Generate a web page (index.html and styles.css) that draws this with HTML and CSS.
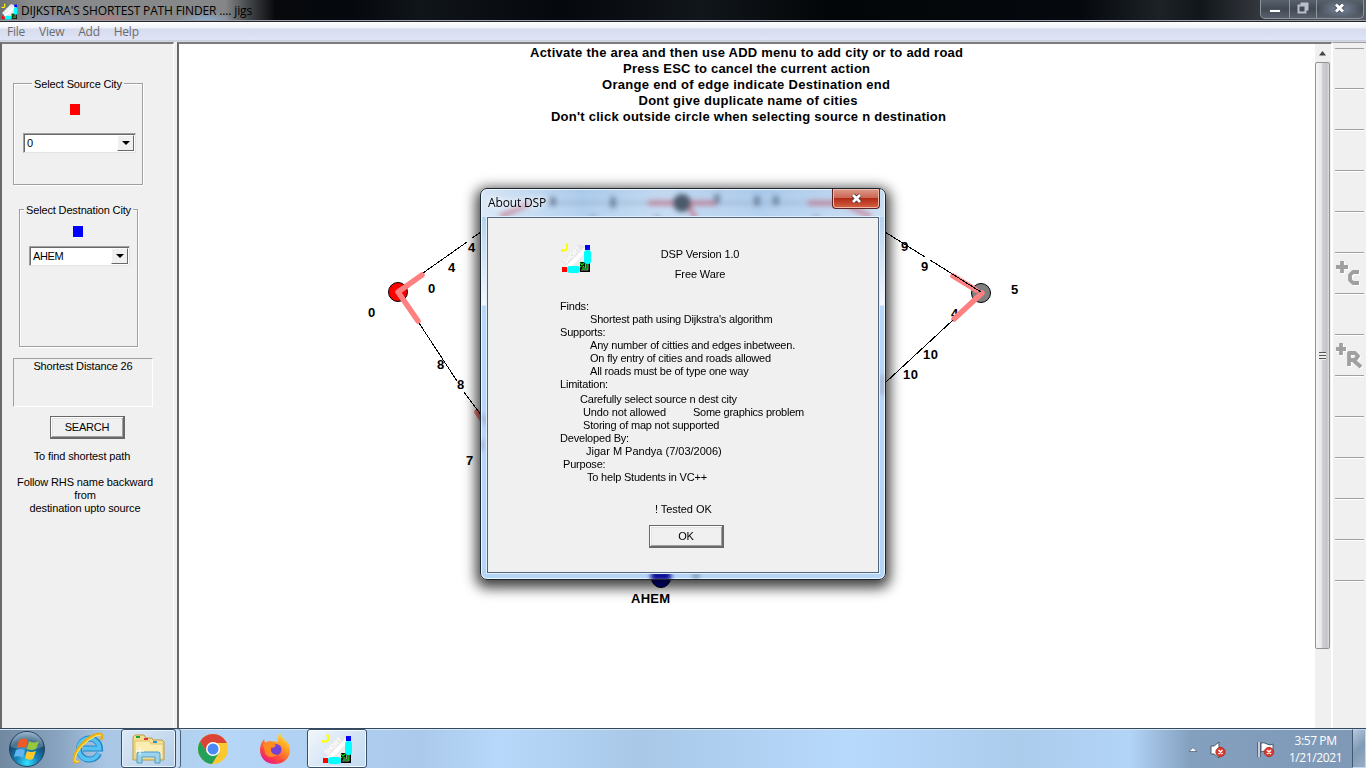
FILE: index.html
```html
<!DOCTYPE html>
<html lang="en">
<head>
<meta charset="utf-8">
<title>DIJKSTRA'S SHORTEST PATH FINDER .... jigs</title>
<link rel="stylesheet" href="styles.css">
</head>
<body>
<svg class="defs" width="0" height="0">
  <symbol id="dsp" viewBox="0 0 32 32">
    <path d="M2 19L19 2L27 5L8 25z" fill="#e6e6e6"/>
    <path d="M7 28L27 8v16L10 29z" fill="#ececec"/>
    <path d="M6.500 26.500L27 6" stroke="#fff" stroke-width="4"/>
    <text class="short" x="0" y="0" transform="translate(6 22) rotate(-44)" textLength="21" lengthAdjust="spacingAndGlyphs">SHORT</text>
    <path d="M5.500 2.500H7V7L5.500 8.500H2V7" fill="none" stroke="#ff0" stroke-width="2"/>
    <path d="M25 3h5v5h-5z" fill="#00f"/>
    <path d="M20 20h10v10H20z" fill="#000"/>
    <path d="M28 21v7h-7M25.500 22v4H22" fill="none" stroke="#eee" stroke-width=".6"/>
    <path d="M20 21l4 4m0-4l-4 4M27 22v5h-5" fill="none" stroke="#0d0" stroke-width="1.200"/>
    <rect x="24" y="8" width="7" height="14" rx="3" fill="#0ff"/>
    <rect x="7" y="24" width="13" height="7" rx="3" fill="#0ff"/>
    <path d="M2 25h5v5H2z" fill="red"/>
  </symbol>
</svg>

<header class="titlebar">
  <svg class="app-icon"><use href="#dsp"/></svg>
  <span class="app-title">DIJKSTRA'S SHORTEST PATH FINDER .... jigs</span>
  <div class="win-buttons">
    <span class="wb wb-min"><svg width="12" height="16"><rect x=".5" y="9.500" width="11" height="3" fill="#fff" stroke="#4c5360"/></svg></span>
    <span class="wb wb-max"><svg width="12" height="16"><path d="M3.500 3.500h7v7M1.500 5.500h7v7h-7z" fill="none" stroke="#b9c0cc" stroke-width="2"/></svg></span>
    <span class="wb wb-close"><svg width="14" height="16"><path d="M3 4.500l7 7m0-7l-7 7" stroke="#4c5360" stroke-width="5"/><path d="M3 4.500l7 7m0-7l-7 7" stroke="#fff" stroke-width="3"/></svg></span>
  </div>
</header>

<nav class="menubar"><span>File</span><span>View</span><span>Add</span><span>Help</span></nav>

<main class="main">
  <aside class="side">
    <fieldset class="group source">
      <legend>Select Source City</legend>
      <i class="swatch red"></i>
      <div class="combo"><span>0</span><b><i></i></b></div>
    </fieldset>
    <fieldset class="group dest">
      <legend>Select Destnation City</legend>
      <i class="swatch blue"></i>
      <div class="combo"><span>AHEM</span><b><i></i></b></div>
    </fieldset>
    <div class="result">Shortest Distance 26</div>
    <div class="button search">SEARCH</div>
    <p class="hint">To find shortest path</p>
    <p class="hint follow">Follow RHS name backward<br>from<br>destination upto source</p>
  </aside>

  <section class="canvas">
    <svg class="graph" width="1136" height="685" viewBox="179 44 1136 685">
      <g class="help" text-anchor="middle">
        <text x="746.500" y="57" textLength="433">Activate the area and then use ADD menu to add city or to add road</text>
        <text x="746.500" y="73" textLength="247">Press ESC to cancel the current action</text>
        <text x="746" y="89" textLength="288">Orange end of edge indicate Destination end</text>
        <text x="748" y="105" textLength="219">Dont give duplicate name of cities</text>
        <text x="748.500" y="121" textLength="395">Don't click outside circle when selecting source n destination</text>
      </g>
      <g class="nodes">
        <circle cx="398" cy="292" r="9.500" fill="red"/>
        <circle cx="981" cy="293" r="9.500" fill="#808080"/>
        <circle cx="661" cy="578" r="9.500" fill="#0000b0"/>
      </g>
      <g class="labels">
        <text x="468" y="252">4</text><text x="448" y="272">4</text>
        <text x="428" y="293">0</text><text x="368" y="317">0</text>
        <text x="437" y="369">8</text><text x="457" y="389">8</text>
        <text x="466" y="465">7</text><text x="901" y="251">9</text>
        <text x="921" y="271">9</text><text x="951" y="318">4</text>
        <text x="1011" y="294">5</text><text x="923" y="359" textLength="15">10</text>
        <text x="903" y="379" textLength="15">10</text>
        <text x="631" y="603" textLength="39">AHEM</text>
      </g>
      <path class="dest-end" d="M422 275L398 292L418 321M953 276L976 290M982 293L954 319M477 412l6 9"/>
      <path class="edge" d="M423 273L467 242M472 238L481 232M419 323L457 381M464 392L481 415M885 232L925 257M930 260L981 292M953 320L885 383"/>
    </svg>
  </section>

  <div class="scroll">
    <div class="arrow"><svg width="8" height="5"><path d="M0 4.500L3.500 0L7 4.500z" fill="#444"/></svg></div>
    <div class="thumb"><span class="grip"></span></div>
  </div>

  <div class="tools">
    <i class="tool first"></i><i class="tool"></i><i class="tool"></i><i class="tool"></i><i class="tool"></i>
    <i class="tool"><svg width="28" height="28"><g class="etch-light"><path d="M7 3v12M1 9h12M24 14h-6l-3 3v5l3 3h6"/></g><g class="etch"><path d="M6 2v12M0 8h12M23 13h-6l-3 3v5l3 3h6"/></g></svg></i>
    <i class="tool"></i>
    <i class="tool"><svg width="28" height="28"><g class="etch-light"><path d="M6 3v12M0 9h11M14 26V13h6l3 3-3 4h-6M18 20l8 7"/></g><g class="etch"><path d="M5 2v12M-1 8h11M13 25V12h6l3 3-3 4h-6M17 19l8 7"/></g></svg></i>
    <i class="tool"></i><i class="tool"></i><i class="tool"></i><i class="tool"></i><i class="tool"></i>
  </div>
</main>

<footer class="taskbar">
  <div class="task orb"><svg width="40" height="38" viewBox="0 0 40 38">
    <defs><radialGradient id="orbg" cx=".5" cy=".9" r=".9"><stop offset="0" stop-color="#35e3ff"/><stop offset=".35" stop-color="#1583bb"/><stop offset=".7" stop-color="#174a72"/><stop offset="1" stop-color="#86a9c4"/></radialGradient></defs>
    <circle cx="20" cy="19" r="17.500" fill="url(#orbg)" stroke="#26435e"/>
    <path d="M4 17a16 15 0 0 1 32 0Q20 22 4 17z" fill="#fff" opacity=".22"/>
    <path d="M12 10q5-3 9 0l-2 8q-5-2-9 0z" fill="#ee5a25"/>
    <path d="M22 11q5 3 10 0l-3 8q-4 2-9 0z" fill="#96c93a"/>
    <path d="M9 20q5-2 9 0l-2 8q-4-3-9-1z" fill="#5fb6f0"/>
    <path d="M20 21q4 2 9 0l-3 8q-4 2-8-1z" fill="#fdc92b"/>
  </svg></div>
  <div class="task ie"><svg width="34" height="34" viewBox="0 0 34 34">
    <path d="M27 21.500a10.500 10.500 0 1 1 1-5H11" fill="none" stroke="#1f86cb" stroke-width="6"/>
    <path d="M26.500 21.500a10.500 10.500 0 1 1 1-5H11" fill="none" stroke="#55c2f3" stroke-width="4"/>
    <path d="M7 29C-1 34 1 22 9 13S29-1 30 4q0 2-1 4" fill="none" stroke="#e9ad10" stroke-width="2.600"/>
    <path d="M7 29C0 32 3 22 10 14S28 1 29 4" fill="none" stroke="#ffe04d" stroke-width="1.300"/>
  </svg></div>
  <div class="task explorer active"><svg width="34" height="32" viewBox="0 0 34 32">
    <path d="M2 4l2-2h9l2 3h6l1 2h9l2 2v18H2z" fill="#f5df8f" stroke="#b99a45"/>
    <path d="M4 8h14l2 3h12v15H4z" fill="#fbedb0" stroke="#d8bd66" stroke-width=".8"/>
    <path d="M5 3h4v2H5z" fill="#15a33a"/><path d="M13 5h4v2h-4z" fill="#d33"/><path d="M22 8h4v2h-4z" fill="#2a8fd6"/>
    <path d="M6 30V21q0-2 2-2h19q2 0 2 2v9h-5v-6H11v6z" fill="#9bd3ec" stroke="#4d9bc4"/>
    <path d="M9 14v8M5 18h8" stroke="#fff" stroke-width="1"/>
  </svg></div>
  <div class="task chrome"><svg width="32" height="32" viewBox="0 0 32 32">
    <circle cx="16" cy="16" r="15" fill="#fbc92f"/>
    <path d="M3 8.500A15 15 0 0 1 29 8.500L30 10H16L10 20z" fill="#dc4437"/>
    <path d="M3 8.500A15 15 0 0 0 15 31l7-11.500L10 19.500z" fill="#23a05a"/>
    <circle cx="16" cy="16" r="7" fill="#fff"/><circle cx="16" cy="16" r="5.500" fill="#4a8af4"/>
  </svg></div>
  <div class="task firefox"><svg width="32" height="34" viewBox="0 0 32 34">
    <defs><linearGradient id="ff" x1=".9" y1="0" x2=".25" y2="1"><stop offset="0" stop-color="#fff04a"/><stop offset=".4" stop-color="#ff9a22"/><stop offset=".75" stop-color="#ff4243"/><stop offset="1" stop-color="#e31587"/></linearGradient></defs>
    <path d="M16 32C6 32 1 25 1 18q0-6 4-11l1 4q2-2 5-2l8 1q-1-6 2-9 1 4 5 7 5 4 5 10c0 8-6 14-15 14z" fill="url(#ff)"/>
    <circle cx="17" cy="17.500" r="5.500" fill="#7442d4"/>
    <path d="M4 12q5-3 8-1l5 2q-1 3-5 3-1 6 6 7-8 5-12-2z" fill="#ff8a23"/>
  </svg></div>
  <div class="task dsp active"><svg width="32" height="32"><use href="#dsp"/></svg></div>
  <div class="tray">
    <svg class="tray-icons" width="90" height="22" viewBox="1186 738 90 22">
      <path d="M1188 751.500l4-4 4 4z" fill="#fff" stroke="#55677c" stroke-width=".8"/>
      <path d="M1210 746h3l5-4v16l-5-4h-3z" fill="#fff" stroke="#4b5a6c"/>
      <path d="M1258 742v15" stroke="#334" stroke-width="3"/><path d="M1258 742v15" stroke="#fff" stroke-width="1.500"/>
      <path d="M1260 743q3-1 6 1t6 0v8q-3 2-6 0t-6 0z" fill="#fff" stroke="#4b5a6c"/>
      <g fill="#dd3a2e" stroke="#a6241c" stroke-width=".7"><circle cx="1219.500" cy="752" r="4.700"/><circle cx="1268" cy="752" r="4.700"/></g>
      <path d="M1217.500 750l4 4m0-4l-4 4M1266 750l4 4m0-4l-4 4" stroke="#fff" stroke-width="1.500"/>
    </svg>
    <div class="clock"><span>3:57 PM</span><span>1/21/2021</span></div>
    <i class="peek"></i>
  </div>
</footer>

<div class="dialog">
  <svg class="glass" width="404" height="390" viewBox="481 189 404 390">
    <g filter="url(#soft)">
      <path d="M540 203H860" stroke="#6f86a0" stroke-width="1.500" opacity=".55"/>
      <path d="M648 203h68M808 203h35l28 14M688 205l8 14M530 203l-30 14" stroke="#c25c70" stroke-width="5" opacity=".6" fill="none"/>
      <circle cx="682" cy="203" r="9" fill="#4b5a6c"/>
      <path d="M553 197v9M613 197v11M717 194v10M757 196v10M776 196v9M593 216v3M657 216v3M816 216v3M696 573v6" stroke="#37485c" stroke-width="6" opacity=".5"/>
      <path d="M651 576h20" stroke="#000090" stroke-width="9"/>
      <path d="M482 415l6 10M882 375v20M482 440v10" stroke="#7d5f80" stroke-width="4" opacity=".4"/>
    </g>
    <defs><filter id="soft"><feGaussianBlur stdDeviation="2.500"/></filter></defs>
  </svg>
  <div class="dialog-head"><span class="dialog-title">About DSP</span>
    <span class="dialog-close"><svg width="14" height="12"><path d="M3 2l7 7m0-7l-7 7" stroke="#4d3439" stroke-width="4.500"/><path d="M3 2l7 7m0-7l-7 7" stroke="#fff" stroke-width="2.700"/></svg></span>
  </div>
  <div class="dialog-body">
    <div class="about-top">
      <svg width="32" height="32"><use href="#dsp"/></svg>
      <div class="about-name"><span>DSP Version 1.0</span><span>Free Ware</span></div>
    </div>
    <div class="about-lines">
      <p>Finds:</p>
      <p class="in30">Shortest path using Dijkstra's algorithm</p>
      <p>Supports:</p>
      <p class="in30">Any number of citties and edges inbetween.</p>
      <p class="in30">On fly entry of cities and roads allowed</p>
      <p class="in30">All roads must be of type one way</p>
      <p>Limitation:</p>
      <p class="in20 gap">Carefully select source n dest city</p>
      <p class="in23"><span class="undo">Undo not allowed</span><span class="graphics">Some graphics problem</span></p>
      <p class="in23">Storing of map not supported</p>
      <p>Developed By:</p>
      <p class="in26 dev">Jigar M Pandya (7/03/2006)</p>
      <p class="in3">Purpose:</p>
      <p class="in27">To help Students in VC++</p>
    </div>
    <p class="tested">! Tested OK</p>
    <div class="button ok">OK</div>
  </div>
</div>
</body>
</html>
```
FILE: styles.css
```css
* { box-sizing: border-box; }
body {
  margin: 0; width: 1366px; height: 768px; overflow: hidden;
  display: flex; flex-direction: column; position: relative;
  background: #f0f0f0; color: #000;
  font: 11px/13px "Liberation Sans", Arial, sans-serif; letter-spacing: -0.2px;
}
p { margin: 0; white-space: nowrap; }
svg { display: block; flex: none; }
.defs { position: absolute; }
.short { font: bold 7px "Liberation Sans", sans-serif; fill: #fff; letter-spacing: 0; }

/* window title */
.titlebar {
  height: 22px; flex: none; display: flex; align-items: flex-start;
  border-bottom: 1px solid #22262c; box-shadow: inset 0 -1px #9ba0a8;
  background:
    radial-gradient(ellipse 30px 8px at 50px 20px, #8c9bd099, transparent),
    radial-gradient(ellipse 25px 8px at 107px 20px, #c77b7f99, transparent),
    radial-gradient(ellipse 30px 10px at 205px 21px, #8fc0f0bb, transparent),
    linear-gradient(90deg, #6d7074 0, #8a8b8c 30px, #858687 225px, #45484a 248px, #07090d 275px, #05080c 350px, #10151a 420px, #05080c 560px, #11161a 700px, #030609 830px, #05090d 1080px, #1d2227 1160px, #11161b 1200px, #34383e 1260px, #565c66 1366px);
}
.app-icon { width: 17px; height: 17px; margin: 3px 3px 0 1px; overflow: visible; }
.app-title { font: 12px/20px "Open Sans", sans-serif; letter-spacing: -0.14px; width: 300px; white-space: nowrap; padding-top: 1px; }
.win-buttons {
  margin-left: auto; margin-right: 2px; width: 104px; height: 19px; display: flex;
  border: 1px solid #8e949e; border-top: 0; border-radius: 0 0 5px 5px; background: linear-gradient(#59616c, #424953 50%, #59616c);
}
.wb { display: flex; justify-content: center; border-right: 1px solid #8e949e; }
.wb-min { width: 29px; } .wb-max { width: 27px; } .wb-close { flex: 1; border: 0; background: radial-gradient(#7c8a9f, transparent 70%); }

.menubar {
  height: 20px; flex: none; display: flex; gap: 14px; padding-left: 7px;
  background: linear-gradient(#fff 0, #eef1f9 6px, #d6dcee 7px, #dfe5f6 18px, #b4bccd 19px, #f0f0f0 20px);
  font: 12px/20px "Open Sans", sans-serif; letter-spacing: -0.25px; color: #6d6d6d;
}

.main { flex: 1; display: flex; min-height: 0; }
.side {
  width: 174px; flex: none; display: flex; flex-direction: column; align-items: flex-start;
  border: solid #696969; border-width: 2px 0 0 2px; border-top-color: #7c7c7c; border-right: 1px solid #fff; padding: 32px 0 0 11px;
}
.group { position: relative; margin: 0; padding: 0; border: 1px solid #a0a0a0; box-shadow: 1px 1px #fff, inset 1px 1px #fff; min-width: 0; display: flex; flex-direction: column; align-items: center; }
legend { padding: 2px 2px 0; margin: 0 auto; background: #f0f0f0; letter-spacing: -0.15px; }
.source { width: 130px; height: 109px; }
.dest { width: 119px; height: 145px; margin: 17px 0 0 6px; }
.swatch { width: 10px; height: 11px; display: block; margin: 13px auto 0; }
.source .swatch { margin-left: 56px; }
.dest .swatch { margin: 9px 0 0 53px; align-self: flex-start; }
.red { background: red; } .blue { background: #00f; }
.combo { display: flex; align-items: center; height: 20px; background: #fff; border: 1px solid #a0a0a0; border-right-color: #e3e3e3; border-bottom-color: #e3e3e3; box-shadow: inset 1px 1px #696969; padding: 1px 1px 1px 3px; }
.combo span { padding-top: 1px; letter-spacing: -0.4px; }
.source .combo { width: 113px; margin: 18px auto 0 9px; }
.dest .combo { width: 101px; margin: 9px auto 0 9px; }
.combo b { margin-left: auto; width: 17px; height: 16px; background: #f0f0f0; border: 1px solid #fff; border-right-color: #696969; border-bottom-color: #696969; display: flex; align-items: center; justify-content: center; }
.combo b i { border: 4px solid transparent; border-top-color: #000; border-bottom: 0; }
.result { width: 140px; height: 49px; margin-top: 11px; border: 1px solid #a0a0a0; border-right-color: #fff; border-bottom-color: #fff; text-align: center; padding-top: 1px; letter-spacing: -0.15px; }
.button { border: 1px solid #696969; border-right-width: 2px; border-bottom-width: 2px; box-shadow: inset 1px 1px #fff, inset -1px -1px #a0a0a0, inset 2px 2px #e3e3e3; text-align: center; line-height: 20px; height: 23px; width: 75px; }
.search { margin: 9px 0 0 37px; }
.hint { width: 138px; text-align: center; margin-top: 11px; letter-spacing: -0.12px; }
.follow { width: 144px; margin-top: 13px; }

.canvas { width: 1138px; flex: none; margin-left: 3px; background: #fff; border: solid #696969; border-width: 2px 0 0 2px; border-top-color: #7c7c7c; }
.graph text { font: bold 13px "Liberation Sans", sans-serif; letter-spacing: 0; }
.nodes circle { stroke: #000; }
.dest-end { fill: none; stroke: #ff8080; stroke-width: 5.500; stroke-linecap: round; stroke-linejoin: round; }
.edge { fill: none; stroke: #000; shape-rendering: crispEdges; }

.scroll { width: 17px; flex: none; border-top: 2px solid #7c7c7c; border-right: 1px solid #fff; background: #f0f0f0; display: flex; flex-direction: column; padding-right: 1px; }
.arrow { height: 18px; padding: 7px 0 0 4px; }
.thumb { height: 587px; border: 1px solid #929292; border-radius: 2px; background: linear-gradient(90deg, #f6f6f6, #e6e6e8 45%, #cfcfd3 50%, #c3c3c8 85%, #e0e0e3); display: flex; align-items: center; justify-content: center; }
.grip { width: 7px; height: 8px; background: repeating-linear-gradient(#555 0 1px, #eee 1px 3px); }
.tools { flex: 1; padding: 5px 2px 0 2px; border-top: 1px solid #a0a0a0; border-left: 1px solid #fff; display: flex; flex-direction: column; }
.tool { height: 41px; flex: none; border-bottom: 1px solid #a0a0a0; box-shadow: 0 1px #fff; display: flex; align-items: center; padding-left: 1px; }
.tool.first { border-top: 1px solid #a0a0a0; }
.etch, .etch-light { fill: none; stroke: #a0a0a0; stroke-width: 3.800; stroke-linejoin: round; }
.etch-light { stroke: #fff; }

/* taskbar */
.taskbar {
  height: 40px; flex: none; display: flex; align-items: stretch; border-top: 1px solid #35485c; box-shadow: inset 0 1px #d5e6f6;
  background: linear-gradient(90deg, #7088a0 0, #8aa5c1 60px, #a9c6e4 105px, #b5d6f7 230px, #abcaeb 420px, #b7d8fa 500px, #a9c8e8 640px, #b7d9fc 850px, #acccec 1020px, #b2d4f7 1130px, #84a0bf 1190px, #7e98b5 1366px);
}
.task { flex: none; display: flex; align-items: center; justify-content: center; }
.orb { width: 54px; } .ie { width: 67px; padding-right: 1px; padding-left: 4px; }
.active { border: 1px solid #36506b; border-radius: 3px; box-shadow: inset 0 0 0 1px #f5faff; background: linear-gradient(135deg, #f2f7fc, #d4e4f4 55%, #c4dbf2); }
.explorer { width: 55px; padding-bottom: 0; background: linear-gradient(135deg, #dce9f5, #b4cee9); box-shadow: inset 0 0 0 1px #e8f2fc, 4px 0 #c3daf0, 5px 0 #48617b; }
.explorer svg { margin-right: 2px; }
.chrome { width: 62px; margin-left: 6px; } .firefox { width: 62px; }
.task.dsp { width: 60px; margin-left: 1px; }
.tray { margin-left: auto; display: flex; color: #fff; }
.tray-icons { margin: 9px -1px 0 0; }
.clock { width: 76px; display: flex; flex-direction: column; align-items: center; font: 12px/17px "Open Sans", sans-serif; letter-spacing: -0.4px; padding: 3px 0 0 3px; }
.peek { width: 14px; border: 1px solid #c5d8eb; border-left-color: #415870; background: linear-gradient(135deg, #b4c9dd, #809ab5 50%, #97aec6); }

/* about window */
.dialog {
  position: absolute; left: 480px; top: 188px; width: 406px; height: 392px; display: flex; flex-direction: column;
  border: 1px solid #1b2630; border-radius: 7px; padding: 0 6px 6px; overflow: visible;
  background: linear-gradient(90deg, #fff8, transparent 25%, #fff4 45%, transparent 70%, #fff5) 0 0/100% 28px no-repeat, linear-gradient(#aac9ea 0, #b5d2f0 28px, #d3e4f5 70px, #f3f8fd 116px, #b8d8fb 117px, #b5d5f7);
  box-shadow: inset 0 0 0 1px #eef7ff, 0 4px 13px 4px rgba(0,0,0,.75);
}
.glass { position: absolute; left: 0; top: 0; border-radius: 6px; }
.dialog-head { position: relative; height: 28px; flex: none; display: flex; justify-content: space-between; }
.dialog-title { font: 12px/27px "Open Sans", sans-serif; letter-spacing: -0.15px; padding-left: 1px; text-shadow: 0 0 6px #fff, 0 0 6px #fff; }
.dialog-close { width: 48px; height: 20px; margin-right: -1px; display: flex; align-items: center; justify-content: center; border: 1px solid #5b2528; border-top: 0; border-radius: 0 0 4px 4px; box-shadow: inset 0 0 0 1px #f0b9a7; background: linear-gradient(#dd9b8d, #cc6550 48%, #b22b17 50%, #d66343); padding-left: 2px; }
.dialog-body { position: relative; flex: 1; background: #f0f0f0; border: 1px solid #53657a; box-shadow: 0 0 0 1px #e2f0fd; padding: 24px 0 0 72px; }
.about-top { display: flex; height: 58px; }
.about-name { width: 80px; margin-left: 68px; padding-top: 6px; display: flex; flex-direction: column; align-items: center; gap: 7px; white-space: nowrap; letter-spacing: -0.12px; }
.in3 { padding-left: 3px; } .in20 { padding-left: 20px; } .in23 { padding-left: 23px; } .in26 { padding-left: 26px; } .in27 { padding-left: 27px; } .in30 { padding-left: 30px; }
.gap { margin-top: 2px; }
.dev { letter-spacing: 0; }
.graphics { letter-spacing: -0.25px; }
.undo { display: inline-block; width: 110px; letter-spacing: -0.12px; }
.tested { margin: 19px 0 0 95px; letter-spacing: -0.05px; }
.ok { margin: 9px 0 0 89px; width: 75px; }
```
